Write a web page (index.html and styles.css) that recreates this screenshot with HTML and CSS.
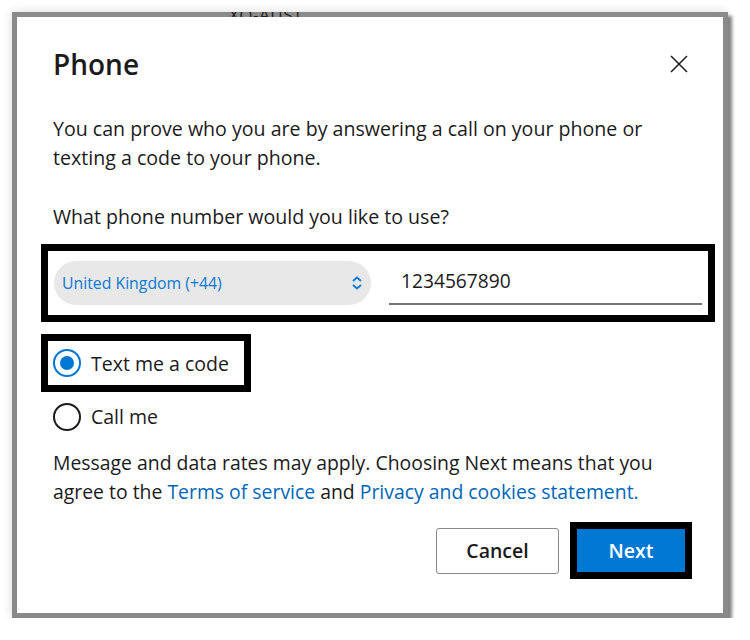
FILE: index.html
```html
<!DOCTYPE html>
<html lang="en">
<head>
    <meta charset="UTF-8">
    <meta name="viewport" content="width=device-width, initial-scale=1.0">
    <title>Phone</title>
    <link rel="stylesheet" href="styles.css">
</head>
<body>
    <div class="peek"><span>XO-AUST</span></div>
    <div class="frame">
        <div class="dialog">
            <div class="dialog-head">
                <h1>Phone</h1>
                <button class="close-btn" aria-label="Close">
                    <svg width="18" height="18" viewBox="0 0 18 18"><path d="M1 1 L17 17 M17 1 L1 17" stroke="#1b1b1b" stroke-width="1.5" fill="none"/></svg>
                </button>
            </div>
            <p class="intro">You can prove who you are by answering a call on your phone or texting a code to your phone.</p>
            <p class="question">What phone number would you like to use?</p>

            <div class="phone-box">
                <div class="country-select">
                    <span>United Kingdom (+44)</span>
                    <svg width="12" height="14" viewBox="0 0 12 14"><path d="M2 5 L6 1.5 L10 5 M2 9 L6 12.5 L10 9" stroke="#0a78d7" stroke-width="1.8" fill="none"/></svg>
                </div>
                <div class="phone-input">1234567890</div>
            </div>

            <div class="radio-box">
                <label class="radio-row">
                    <span class="radio checked"></span>
                    Text me a code
                </label>
            </div>
            <label class="radio-row call">
                <span class="radio"></span>
                Call me
            </label>

            <p class="terms">Message and data rates may apply. Choosing Next means that you agree to the <a href="#">Terms of service</a> and <a href="#">Privacy and cookies statement.</a></p>

            <div class="actions">
                <button class="btn cancel">Cancel</button>
                <div class="next-box">
                    <button class="btn next">Next</button>
                </div>
            </div>
        </div>
    </div>
</body>
</html>
```

FILE: styles.css
```css
body { margin: 0; background: #fff; font-family: "Open Sans", "Noto Sans", sans-serif; color: #1b1b1b; position: relative; }
.peek { position: absolute; top: 12px; left: 229px; height: 5px; overflow: hidden; z-index: 2; }
.peek span { display: block; font-size: 17px; line-height: 17px; color: #222; margin-top: -6px; letter-spacing: 0.5px; }
.frame { margin: 12px 0 0 12px; width: 706px; border: 5px solid #8a8a8a; box-shadow: 4px 4px 3px rgba(0,0,0,0.45), 0 0 10px rgba(0,0,0,0.15); background: #fff; }
.dialog { padding: 29px 36px 34px 36px; height: 533px; }
.dialog-head { display: flex; justify-content: space-between; align-items: center; }
.dialog-head h1 { margin: 0; font-size: 28px; line-height: 36px; font-weight: 600; }
.close-btn { border: 0; background: none; padding: 0; width: 18px; height: 18px; margin-right: -1px; display: flex; }
.intro { margin: 32px 0 0; font-size: 19.6px; line-height: 29px; }
.question { margin: 30px 0 0; font-size: 19.6px; line-height: 29px; }
.phone-box { margin: 13px -28px 0 -12px; border: 7px solid #000; padding: 9px 6px 10px 6px; display: flex; gap: 18px; align-items: flex-end; }
.country-select { flex: 1; height: 44px; border-radius: 22px; background: #e8e8e8; display: flex; align-items: center; justify-content: space-between; padding: 0 8px 0 8px; font-size: 15.8px; color: #0a78d7; }
.phone-input { flex: 1; line-height: 42px; border-bottom: 2px solid #767676; padding-left: 12px; font-size: 19.2px; box-sizing: border-box; height: 45px; }
.radio-box { margin: 12px 0 0 -12px; width: 191px; border: 7px solid #000; padding: 0 0 0 5px; height: 44px; display: flex; align-items: center; box-sizing: content-box; }
.radio-row { display: flex; align-items: center; gap: 10px; font-size: 19.5px; line-height: 29px; white-space: nowrap; }
.radio { width: 28px; height: 28px; border: 2px solid #1b1b1b; border-radius: 50%; box-sizing: border-box; position: relative; flex: none; }
.radio.checked { border-color: #0078d4; }
.radio.checked::after { content: ""; position: absolute; left: 5px; top: 5px; width: 14px; height: 14px; border-radius: 50%; background: #0078d4; }
.call { margin-top: 10px; }
.terms { margin: 17px 0 0; font-size: 19.4px; line-height: 29px; }
.terms a { color: #0067b8; text-decoration: none; }
.actions { display: flex; justify-content: flex-end; align-items: center; gap: 11px; margin: 16px -5px 0 0; }
.btn { font-family: inherit; font-size: 19.5px; font-weight: 600; cursor: pointer; }
.cancel { width: 123px; height: 46px; background: #fff; border: 1px solid #8a8886; border-radius: 3px; color: #1b1b1b; }
.next-box { border: 7px solid #000; }
.next { display: block; width: 108px; height: 43px; border: 0; background: #0078d4; color: #fff; }
```
